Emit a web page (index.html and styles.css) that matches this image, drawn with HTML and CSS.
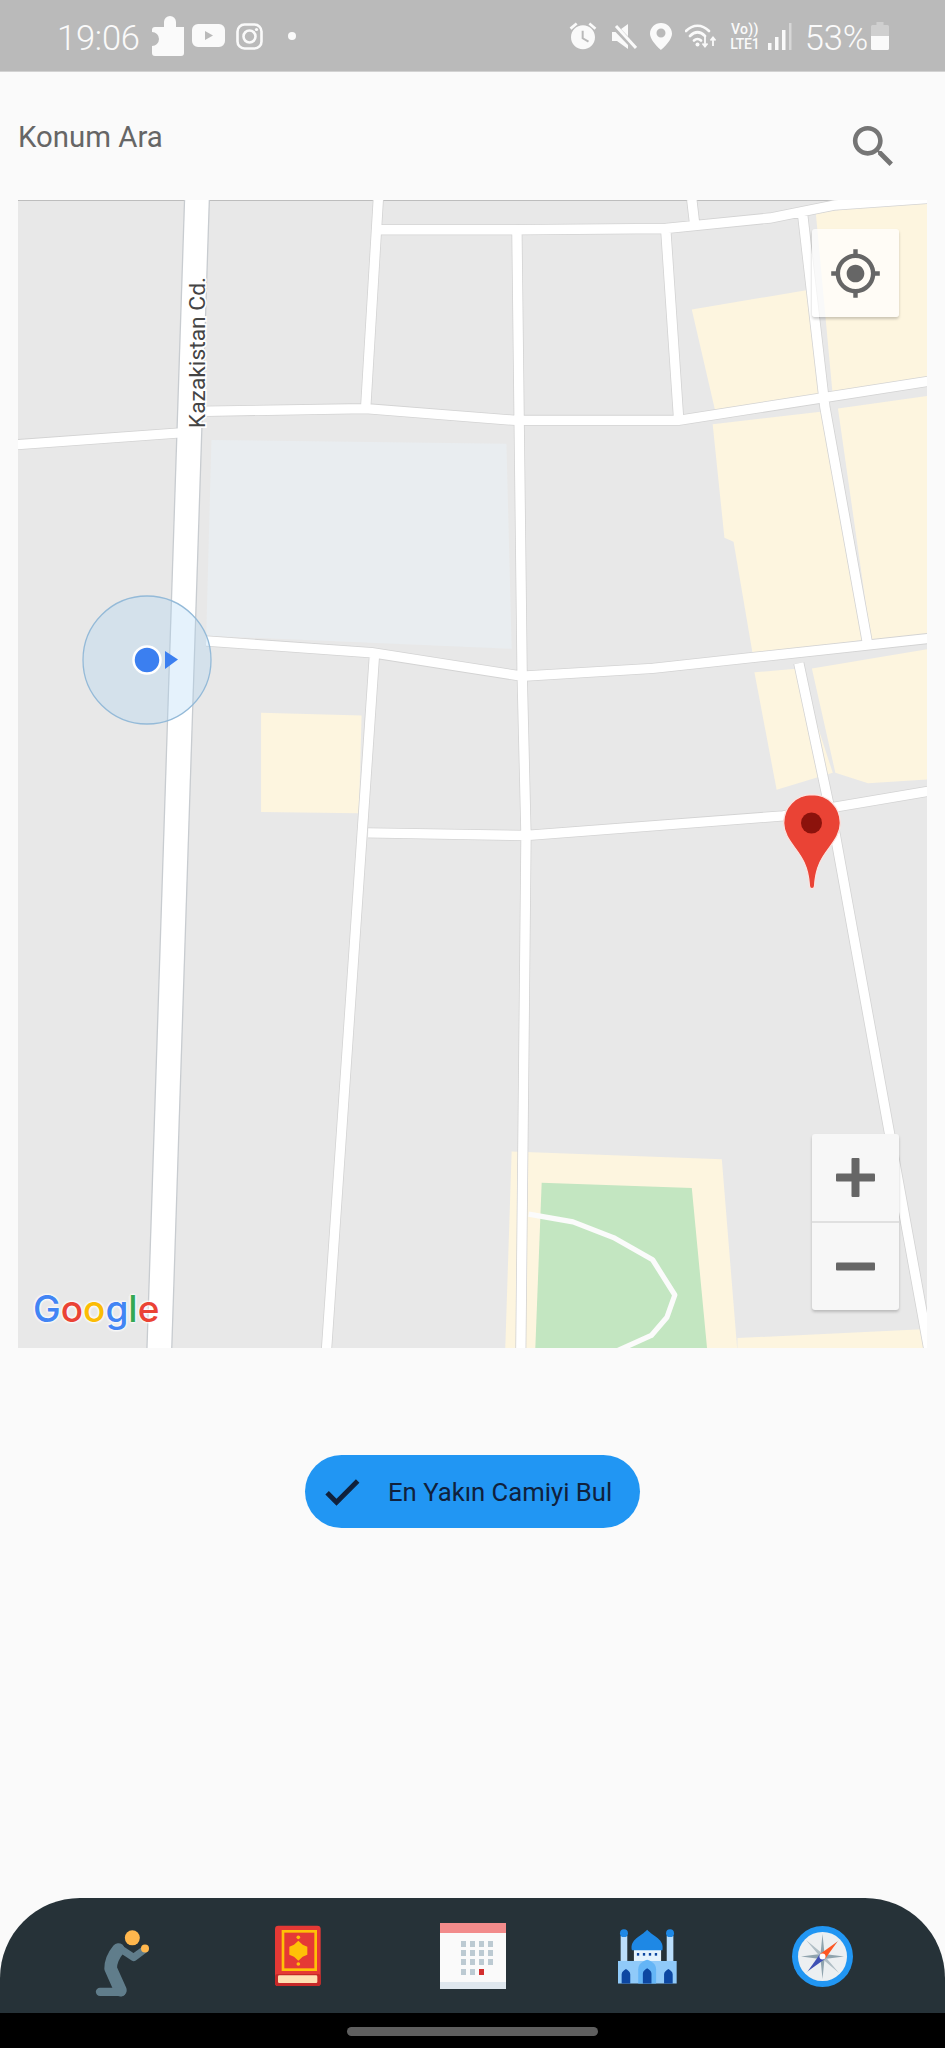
FILE: index.html
```html
<!DOCTYPE html>
<html lang="tr">
<head>
<meta charset="utf-8">
<title>Konum Ara</title>
<link rel="stylesheet" href="styles.css">
</head>
<body>
<div class="screen">
  <header class="status">
    <div class="status-left">
      <span class="clock">19:06</span>
      <svg class="st-puzzle" viewBox="0 0 34 40"><path d="M4 11H13V6a6 6 0 0 1 12 0V11H33V37a3 3 0 0 1-3 3H4a3 3 0 0 1-3-3V30a7 7 0 0 0 0-14V14a3 3 0 0 1 3-3z"/></svg>
      <svg class="st-yt" viewBox="0 0 33 23"><path fill-rule="evenodd" d="M6 0H27a6 6 0 0 1 6 6V17a6 6 0 0 1-6 6H6a6 6 0 0 1-6-6V6a6 6 0 0 1 6-6zM13 7V16L21 11.500z"/></svg>
      <svg class="st-ig" viewBox="0 0 27 27"><rect class="st-line" x="1.500" y="1.500" width="24" height="24" rx="7"/><circle class="st-line" cx="13.500" cy="13.500" r="6"/><circle cx="20.500" cy="6.500" r="1.600"/></svg>
      <span class="st-dot"></span>
    </div>
    <div class="status-right">
      <svg class="st-alarm" viewBox="0 0 24 24"><path fill-rule="evenodd" d="M22 5.720l-4.600-3.860-1.290 1.530 4.600 3.860L22 5.720zM7.880 3.390L6.600 1.860 2 5.710l1.290 1.530 4.590-3.850zM12.500 8H11v6l4.750 2.850.75-1.230-4-2.370V8zM12 4c-4.970 0-9 4.030-9 9s4.020 9 9 9c4.970 0 9-4.030 9-9s-4.030-9-9-9z"/></svg>
      <svg class="st-mute" viewBox="0 0 26 27"><path d="M1 9H6L17 1V26L6 18H1z"/><path class="st-cut" d="M2 2L25 26"/><path class="st-slash" d="M5 3L25 25"/></svg>
      <svg class="st-pin" viewBox="0 0 22 27"><path fill-rule="evenodd" d="M11 0C5 0 0 4.800 0 10.500 0 18 11 27 11 27s11-9 11-16.500C22 4.800 17 0 11 0zm0 14.500a4.500 4.500 0 1 1 0-9 4.500 4.500 0 0 1 0 9z"/></svg>
      <svg class="st-wifi" viewBox="0 0 32 26"><path class="st-line" d="M1 8C8 1 17 1 24 8M5 13C10 8 15 8 20 13M9 17.500C11 15.500 14 15.500 16 17.500"/><circle cx="12.500" cy="21.500" r="2"/><path class="st-arrows" d="M20 14V23M17.500 20.500L20 23.500 22.500 20.500M28 23V15M25.500 17.500L28 14.500 30.500 17.500"/></svg>
      <div class="st-lte"><span class="st-vo">Vo))</span><span class="st-ltx">LTE1</span></div>
      <svg class="st-signal" viewBox="0 0 24 27"><rect y="20" width="3.500" height="7"/><rect x="7" y="14" width="3.500" height="13"/><rect x="14" y="7" width="3.500" height="20"/><rect class="st-faint" x="21" y="0" width="2.500" height="27"/></svg>
      <span class="clock pct">53%</span>
      <svg class="st-batt" viewBox="0 0 18 28"><path class="st-batt-top" d="M5.500 0H12.500V3H16.500A1.500 1.500 0 0 1 18 4.500V14H0V4.500A1.500 1.500 0 0 1 1.500 3H5.500z"/><path d="M0 14H18V26.500A1.500 1.500 0 0 1 16.500 28H1.500A1.500 1.500 0 0 1 0 26.500z"/></svg>
    </div>
  </header>

  <main class="content">
    <div class="search-row">
      <span class="search-label">Konum Ara</span>
      <svg class="search-icon" viewBox="0 0 24 24"><path d="M15.500 14h-.79l-.28-.27C15.410 12.590 16 11.110 16 9.500 16 5.910 13.090 3 9.500 3S3 5.910 3 9.500 5.910 16 9.500 16c1.610 0 3.090-.59 4.230-1.570l.27.28v.79l5 4.990L20.490 19l-4.990-5zm-6 0C7.010 14 5 11.990 5 9.500S7.010 5 9.500 5 14 7.010 14 9.500 11.990 14 9.500 14z"/></svg>
    </div>

    <section class="map">
      <svg class="map-base" viewBox="13.800 153.200 696.400 879.400" preserveAspectRatio="none">
        <defs>
          <path id="minor" d="M290 150L280 315M290 176L395 176 510 175 590 167 640 157 712 152M8 341L146 331M158 315L280 313 395 322 520 322 712 292M396 175L400 515 403 640 399 1036M510 175L520 322M615 165L632 312 665 495M612 508L640 640 712 1036M158 491L285 500 400 518 500 512 712 489M287 500L250 1036M282 638L403 640 600 625 712 606M530 153L532 170"/>
          <path id="major" d="M151 150L122 1036"/>
        </defs>
        <g class="beige">
          <polygon points="530,237 620,222 630,305 548,315"/>
          <polygon points="546,325 632,315 662,490 577,503 562,415 555,412"/>
          <polygon points="625,163 712,153 712,295 638,303"/>
          <polygon points="642,313 712,303 712,490 668,495"/>
          <polygon points="578,515 612,512 638,592 595,605"/>
          <polygon points="622,512 712,497 712,597 665,600 640,592"/>
          <polygon points="200,546 277,548 275,623 200,622"/>
          <polygon points="392,882 553,888 565,1036 387,1036"/>
          <polygon points="565,1025 712,1018 712,1036 565,1036"/>
        </g>
        <polygon class="school" points="162,337 388,340 392,497 158,487"/>
        <polygon class="park" points="415,906 530,910 542,1036 410,1036"/>
        <path class="park-path" d="M405 930L439 936 470 948 500 965 517 992 511 1009 499 1023 470 1036"/>
        <use href="#minor" class="minor-casing"/>
        <use href="#major" class="major-casing"/>
        <use href="#minor" class="minor-road"/>
        <use href="#major" class="major-road"/>
        <text class="street" transform="translate(157 328) rotate(-90)">Kazakistan Cd.</text>
      </svg>

      <svg class="accuracy" viewBox="0 0 130 130">
        <circle class="acc-ring" cx="65" cy="65" r="64"/>
        <circle class="acc-dot" cx="65" cy="65" r="13.500"/>
        <polygon class="acc-arrow" points="83,56 96,64.500 83,74"/>
      </svg>

      <svg class="pin" viewBox="0 0 58 96">
        <path class="pin-body" d="M29 .7C12.500 .7 .7 13.500 .7 29 .7 38.500 6 46 12 54 18 62 25.500 72 26.500 92 26.700 95.500 31.300 95.500 31.500 92 32.500 72 40 62 46 54 52 46 57.300 38.500 57.300 29 57.300 13.500 45.500 .7 29 .7z"/>
        <circle class="pin-dot" cx="28.500" cy="29" r="10.500"/>
      </svg>

      <div class="ctl ctl-locate">
        <svg class="locate-icon" viewBox="0 0 24 24"><path d="M12 8c-2.210 0-4 1.790-4 4s1.790 4 4 4 4-1.790 4-4-1.790-4-4-4zm8.940 3c-.46-4.170-3.770-7.480-7.940-7.940V1h-2v2.060C6.830 3.520 3.520 6.830 3.060 11H1v2h2.060c.46 4.170 3.770 7.480 7.940 7.940V23h2v-2.060c4.170-.46 7.480-3.770 7.940-7.940H23v-2h-2.060zM12 19c-3.870 0-7-3.130-7-7s3.130-7 7-7 7 3.130 7 7-3.130 7-7 7z"/></svg>
      </div>

      <div class="ctl ctl-zoom">
        <div class="zoom-btn">
          <svg class="zoom-icon" viewBox="0 0 39 39"><rect x="15.500" width="8" height="39" rx="1"/><rect y="15.500" width="39" height="8" rx="1"/></svg>
        </div>
        <div class="zoom-btn">
          <svg class="zoom-icon" viewBox="0 0 39 39"><rect y="15.500" width="39" height="8" rx="1"/></svg>
        </div>
      </div>

      <div class="google"><span class="g-b">G</span><span class="g-r">o</span><span class="g-y">o</span><span class="g-b">g</span><span class="g-g">l</span><span class="g-r">e</span></div>
    </section>

    <button class="find-btn" type="button">
      <svg class="check" viewBox="0 0 24 24"><path d="M9 16.170L4.830 12l-1.420 1.410L9 19 21 7l-1.410-1.410z"/></svg>
      <span>En Yakın Camiyi Bul</span>
    </button>
  </main>

  <nav class="bottom-nav">
    <svg class="ic-pray" viewBox="50 70 165 200">
      <path class="pray-arm" d="M125 125L166 152 196 130"/>
      <path class="pray-body" d="M120 128C106 145 97 165 97 185L126 250"/>
      <path class="pray-shin" d="M130 255H65"/>
      <circle class="pray-skin" cx="162" cy="93" r="22.500"/>
      <circle class="pray-skin" cx="200" cy="125" r="12"/>
    </svg>

    <svg class="ic-quran" viewBox="585 75 138 183">
      <rect class="q-red" x="585" y="77" width="137" height="181" rx="10"/>
      <rect class="q-dark" x="585" y="222" width="137" height="36" rx="8"/>
      <rect class="q-page" x="594" y="226" width="118" height="23" rx="4"/>
      <rect class="q-frame" x="609" y="94" width="98" height="115"/>
      <path class="q-gold" d="M655 122L668 134 682 140 682 164 668 170 655 182 642 170 628 164 628 140 642 134z"/>
      <circle class="q-gold" cx="655" cy="112" r="5.500"/>
      <circle class="q-gold" cx="655" cy="192" r="5.500"/>
    </svg>

    <svg class="ic-cal" viewBox="0 0 66 66">
      <rect class="c-white" width="66" height="66"/>
      <rect class="c-top" width="66" height="10"/>
      <rect class="c-bot" y="59" width="66" height="7"/>
      <g class="c-grey">
        <rect x="21" y="18" width="5" height="6"/><rect x="30" y="18" width="5" height="6"/><rect x="39" y="18" width="5" height="6"/><rect x="48" y="18" width="5" height="6"/>
        <rect x="21" y="27" width="5" height="6"/><rect x="30" y="27" width="5" height="6"/><rect x="39" y="27" width="5" height="6"/><rect x="48" y="27" width="5" height="6"/>
        <rect x="21" y="36" width="5" height="6"/><rect x="30" y="36" width="5" height="6"/><rect x="39" y="36" width="5" height="6"/><rect x="48" y="36" width="5" height="6"/>
        <rect x="21" y="46" width="5" height="6"/><rect x="30" y="46" width="5" height="6"/>
      </g>
      <rect class="c-red" x="39" y="46" width="5" height="6"/>
    </svg>

    <svg class="ic-mosque" viewBox="85 88 178 165">
      <rect class="m-pale" x="93" y="108" width="20" height="80"/>
      <rect class="m-pale" x="232" y="108" width="20" height="80"/>
      <circle class="m-blue" cx="103" cy="100" r="12"/>
      <circle class="m-blue" cx="242" cy="100" r="12"/>
      <rect class="m-white" x="133" y="148" width="82" height="42"/>
      <path class="m-blue" d="M127 152C120 118 155 110 173 90 191 110 226 118 219 152z"/>
      <g class="m-dark"><rect x="142" y="160" width="7" height="8"/><rect x="160" y="160" width="7" height="8"/><rect x="178" y="160" width="7" height="8"/><rect x="196" y="160" width="7" height="8"/></g>
      <rect class="m-light" x="85" y="184" width="177" height="68"/>
      <path class="m-mid" d="M146 252V210C146 192 160 184 173 180 186 184 200 192 200 210V252z"/>
      <path class="m-dark" d="M160 252V222C160 214 167 210 173 206 179 210 186 214 186 222V252zM96 252V224C96 216 103 212 109 208 115 212 122 216 122 224V252zM224 252V224C224 216 231 212 237 208 243 212 250 216 250 224V252z"/>
    </svg>

    <svg class="ic-compass" viewBox="0 0 61 61">
      <circle class="k-ring" cx="30.500" cy="30.500" r="30.500"/>
      <circle class="k-face" cx="30.500" cy="30.500" r="24.500"/>
      <polygon class="k-grey" points="30.500,8 32.500,28 52,30.500 32.500,33 30.500,53 28.500,33 9,30.500 28.500,28"/>
      <polygon class="k-grey2" points="14,14 31,28 47,14 33,30.500 47,47 30.500,33 14,47 28,30.500"/>
      <polygon class="k-orange" points="45.500,15.500 33,33 28,28"/>
      <polygon class="k-indigo" points="16,45 28,28 33,33"/>
      <circle class="k-hub" cx="30.500" cy="30.500" r="3"/>
    </svg>
  </nav>

  <div class="gesture-bar"><span class="gesture-handle"></span></div>
</div>
</body>
</html>
```
FILE: styles.css
```css
* { box-sizing: border-box; }
html, body { margin: 0; padding: 0; }
body { background: #fafafa; font-family: Roboto, "Liberation Sans", sans-serif; }

.screen { width: 945px; height: 2048px; display: flex; flex-direction: column; overflow: hidden; background: #fafafa; }

/* Status bar */
.status { height: 72px; flex: none; background: #bababa; border-bottom: 1px solid #d2d2d2; display: flex; justify-content: space-between; align-items: flex-start; color: #fafafa; fill: #fafafa; }
.status-left { display: flex; align-items: flex-start; padding-left: 57px; }
.status-right { display: flex; align-items: flex-start; padding-right: 56px; }
.clock { font-size: 34.500px; font-weight: 300; line-height: 38px; margin-top: 19px; letter-spacing: -.2px; }
.st-puzzle { width: 34px; height: 40px; margin: 16px 0 0 11px; }
.st-yt { width: 33px; height: 23px; margin: 24px 0 0 7px; }
.st-ig { width: 27px; height: 27px; margin: 23px 0 0 11px; }
.st-line { fill: none; stroke: #fafafa; stroke-width: 2.600; stroke-linecap: round; }
.st-dot { width: 8px; height: 8px; border-radius: 50%; background: #fafafa; margin: 32px 0 0 25px; }
.st-alarm { width: 32px; height: 32px; margin-top: 20px; }
.st-mute { width: 26px; height: 27px; margin: 23px 0 0 12px; }
.st-cut { stroke: #bababa; stroke-width: 6; fill: none; }
.st-slash { stroke: #fafafa; stroke-width: 3; fill: none; }
.st-pin { width: 22px; height: 27px; margin: 23px 0 0 13px; }
.st-wifi { width: 32px; height: 26px; margin: 23px 0 0 13px; }
.st-arrows { fill: none; stroke: #fafafa; stroke-width: 1.800; }
.st-lte { display: flex; flex-direction: column; align-items: center; width: 34px; margin: 22px 0 0 11px; font-size: 14px; line-height: 14px; font-weight: 500; }
.st-vo { letter-spacing: .3px; }
.st-ltx { letter-spacing: -.3px; margin-top: 1px; }
.st-signal { width: 24px; height: 27px; margin: 23px 0 0 6px; }
.st-faint { opacity: .45; }
.pct { margin: 19px 0 0 13px; }
.st-batt { width: 18px; height: 28px; margin: 22px 0 0 3px; }
.st-batt-top { fill: #cfcfcf; }

/* Search */
.content { flex: 1; display: flex; flex-direction: column; align-items: center; }
.search-row { width: 100%; height: 128px; flex: none; display: flex; justify-content: space-between; align-items: flex-start; padding: 47px 44px 0 18px; }
.search-label { font-size: 29.400px; line-height: 34px; color: #666666; margin-top: 1px; }
.search-icon { width: 55px; height: 55px; fill: #757575; flex: none; }

/* Map */
.map { position: relative; width: 909px; height: 1148px; flex: none; background: #e8e8e8; overflow: hidden; box-shadow: inset 0 1px 0 #bdbdbd; }
.map-base { display: block; width: 909px; height: 1148px; }
.beige polygon { fill: #fdf5df; }
.school { fill: #e9edf0; }
.park { fill: #c3e6c1; }
.park-path { fill: none; stroke: #fbfbfb; stroke-width: 4; stroke-linejoin: round; }
.map-base use { fill: none; }
.minor-casing { stroke: #d3d3d3; stroke-width: 8.400; }
.major-casing { stroke: #c8ccd0; stroke-width: 20; }
.minor-road { stroke: #ffffff; stroke-width: 7.200; }
.major-road { stroke: #ffffff; stroke-width: 18; }
.street { font-family: Roboto, "Liberation Sans", sans-serif; font-size: 17.500px; fill: #444444; stroke: #ffffff; stroke-width: 2.500px; paint-order: stroke; }

.accuracy { position: absolute; left: 64px; top: 395px; width: 130px; height: 130px; }
.acc-ring { fill: rgba(160, 210, 245, .28); stroke: #94bad8; stroke-width: 1.300; }
.acc-dot { fill: #3b7ff0; stroke: #ffffff; stroke-width: 2.500; }
.acc-arrow { fill: #3b7ff0; }

.pin { position: absolute; left: 765px; top: 594px; width: 58px; height: 96px; }
.pin-body { fill: #ea4335; stroke: #fbe4e1; stroke-width: 1.200; }
.pin-dot { fill: #8c120c; }

.ctl { position: absolute; left: 794px; width: 87px; border-radius: 3px; box-shadow: 0 2px 3px rgba(0, 0, 0, .2); }
.ctl-locate { top: 29px; height: 88px; background: rgba(255, 255, 255, .72); display: flex; align-items: center; justify-content: center; }
.locate-icon { width: 53px; height: 53px; fill: #666666; }
.ctl-zoom { top: 934px; height: 176px; background: #f7f7f7; display: flex; flex-direction: column; }
.zoom-btn { flex: 1; display: flex; align-items: center; justify-content: center; }
.zoom-btn + .zoom-btn { border-top: 2px solid #e0e0e0; }
.zoom-icon { width: 39px; height: 39px; fill: #666666; }

.google { position: absolute; left: 15px; top: 1084px; font-family: Inter, Roboto, sans-serif; font-size: 37px; line-height: 50px; letter-spacing: 0; font-weight: 500; text-shadow: 0 0 3px #fff, 0 0 3px #fff, 0 0 3px #fff; }
.g-b { color: #4285f4; }
.g-r { color: #ea4335; }
.g-y { color: #fbbc05; }
.g-g { color: #34a853; }

/* Button */
.find-btn { width: 335px; height: 73px; flex: none; margin-top: 107px; padding: 0 0 0 15px; border: 0; border-radius: 37px; background: #2196f3; display: flex; align-items: center; gap: 24px; color: #10213c; font-family: Roboto, "Liberation Sans", sans-serif; font-size: 25.700px; }
.check { width: 44px; height: 44px; fill: #10213c; stroke: #10213c; stroke-width: .7; flex: none; }

/* Bottom nav */
.bottom-nav { height: 115px; flex: none; background: #263238; border-radius: 80px 80px 0 0; display: grid; grid-template-columns: repeat(5, 175px); padding: 0 35px; justify-items: center; }
.ic-pray { width: 55px; height: 67px; margin-top: 32px; }
.pray-arm { fill: none; stroke: #607d8b; stroke-width: 22; stroke-linejoin: round; stroke-linecap: round; }
.pray-body { fill: none; stroke: #607d8b; stroke-width: 38; stroke-linejoin: round; stroke-linecap: round; }
.pray-shin { fill: none; stroke: #607d8b; stroke-width: 25; stroke-linecap: round; }
.pray-skin { fill: #ffb74d; }
.ic-quran { width: 46px; height: 61px; margin-top: 27px; }
.q-red { fill: #e53935; }
.q-dark { fill: #c62828; }
.q-page { fill: #ffe0b2; }
.q-frame { fill: none; stroke: #ffc107; stroke-width: 8; }
.q-gold { fill: #ffc107; }
.ic-cal { width: 66px; height: 66px; margin-top: 25px; }
.c-white { fill: #fafafa; }
.c-top { fill: #f28b8b; }
.c-bot { fill: #dfe7ee; }
.c-grey { fill: #bccad2; }
.c-red { fill: #d32f2f; }
.ic-mosque { width: 59px; height: 55px; margin-top: 31px; }
.m-pale { fill: #bbdefb; }
.m-blue { fill: #1e88e5; }
.m-white { fill: #e3f2fd; }
.m-dark { fill: #0d47a1; }
.m-light { fill: #90caf9; }
.m-mid { fill: #64b5f6; }
.ic-compass { width: 61px; height: 61px; margin-top: 28px; }
.k-ring { fill: #2196f3; }
.k-face { fill: #eceff1; }
.k-grey { fill: #90a4ae; }
.k-grey2 { fill: #b0bec5; }
.k-orange { fill: #ff5722; }
.k-indigo { fill: #3f51b5; }
.k-hub { fill: #ffffff; }

/* Gesture bar */
.gesture-bar { height: 35px; flex: none; background: #000000; display: flex; justify-content: center; padding-top: 14px; }
.gesture-handle { width: 251px; height: 9px; border-radius: 5px; background: #5f5f5f; }
```
